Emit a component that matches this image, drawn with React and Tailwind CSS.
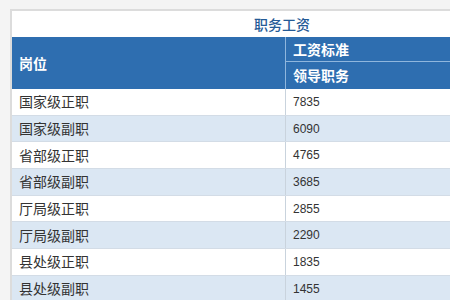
const rows = [
  ['国家级正职', '7835'],
  ['国家级副职', '6090'],
  ['省部级正职', '4765'],
  ['省部级副职', '3685'],
  ['厅局级正职', '2855'],
  ['厅局级副职', '2290'],
  ['县处级正职', '1835'],
  ['县处级副职', '1455'],
];

const cjk = { fontFamily: '"Noto Sans CJK SC", "Noto Sans", sans-serif' };
const num = { fontFamily: '"Liberation Sans", Arial, sans-serif' };

export default function App() {
  return (
    <div className="w-[450px] h-[300px] overflow-hidden bg-[#f4f4f4] pt-[9px] pl-[10px]" style={cjk}>
      <div className="w-[542px] border-l-2 border-t-2 border-[#dcdcdc] bg-white">
        {/* title */}
        <div className="h-[26px] flex items-center justify-center text-[14px] font-medium text-[#245a96]">
          职务工资
        </div>

        {/* header */}
        <div className="flex h-[52px] bg-[#2e6eb0] text-white font-bold text-[14px]">
          <div className="w-[274px] flex items-center pl-[7px] border-r border-[#8fb6dd]">岗位</div>
          <div className="flex-1 flex flex-col">
            <div className="h-[25px] flex items-center pl-[7px] border-b border-[#8fb6dd]">工资标准</div>
            <div className="flex-1 flex items-center pl-[7px]">领导职务</div>
          </div>
        </div>

        {/* body */}
        {rows.map(([name, val], i) => (
          <div
            key={name}
            className={`flex h-[26.7px] border-b border-[#d3dce6] ${i % 2 ? 'bg-[#dbe7f3]' : 'bg-white'}`}
          >
            <div className="w-[274px] flex items-center pl-[7px] text-[14px] text-[#333] border-r border-[#c9d3dd]">
              {name}
            </div>
            <div className="flex-1 flex items-center pl-[7px] text-[12px] text-[#333]" style={num}>
              {val}
            </div>
          </div>
        ))}
      </div>
    </div>
  );
}
